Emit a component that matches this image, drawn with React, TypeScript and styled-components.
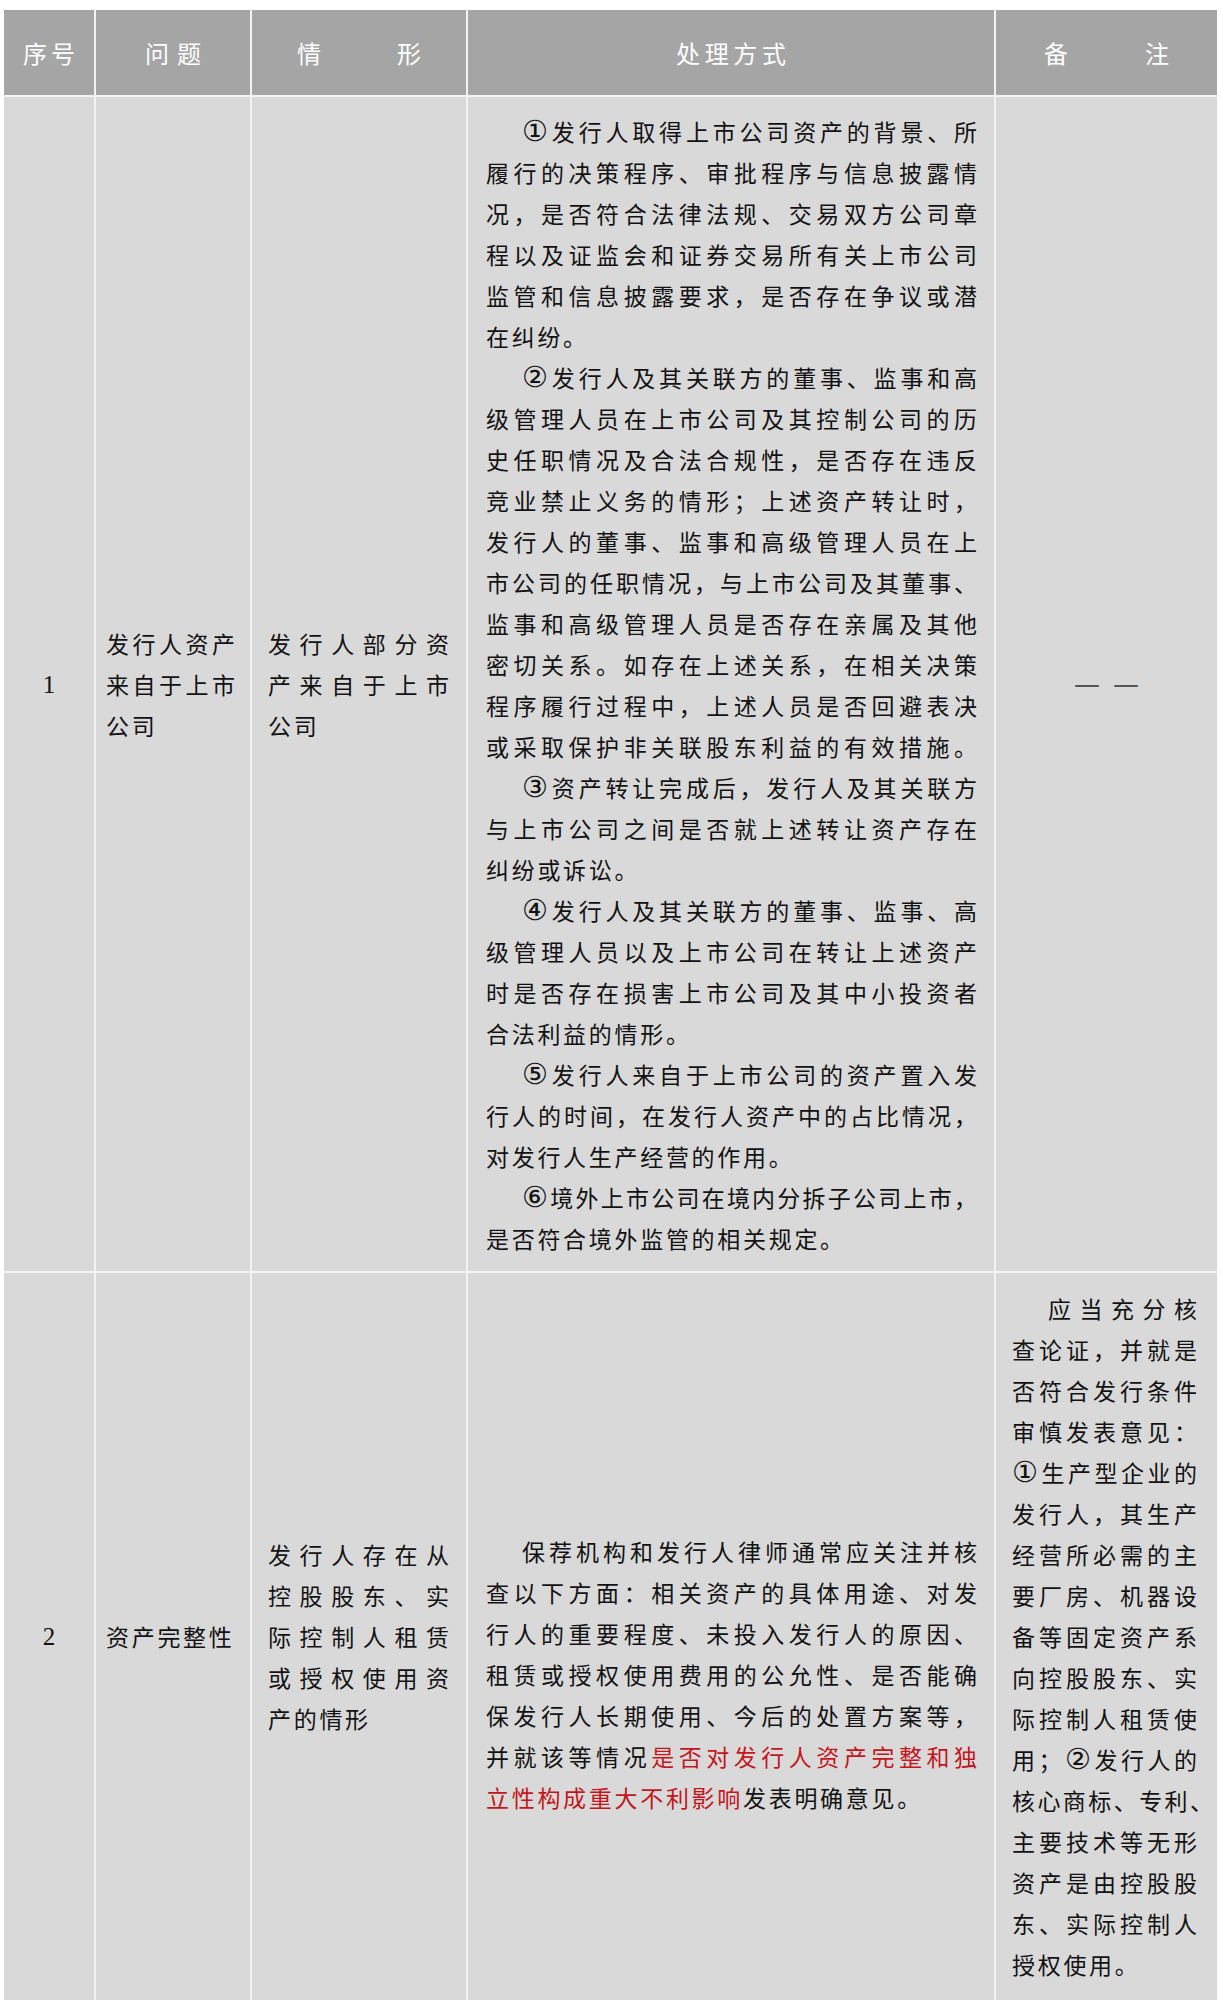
import React from "react";
import styled, { createGlobalStyle } from "styled-components";

const GlobalStyle = createGlobalStyle`
  html, body { margin: 0; padding: 0; background: #ffffff; }
  body { font-family: "Noto Sans CJK SC", "Noto Sans", sans-serif; }
`;

const Page = styled.div`
  padding: 10px 4px 9px 4px;
`;

const Table = styled.div`
  display: grid;
  grid-template-columns: 90px 154px 214px 526px 221px;
  gap: 2px;
  width: 1213px;
  background: #f3f3f3;
`;

const HeadCell = styled.div`
  background: #a5a5a5;
  height: 85px;
  display: flex;
  align-items: center;
  justify-content: center;
  color: #ffffff;
  font-size: 24px;
`;

const Spread = styled.span<{ $w: number }>`
  display: flex;
  justify-content: space-between;
  width: ${(p) => p.$w}px;
`;

const Cell = styled.div<{ $pad: string }>`
  background: #d9d9d9;
  display: flex;
  flex-direction: column;
  justify-content: center;
  padding: ${(p) => p.$pad};
  font-size: 23px;
  line-height: 41px;
  color: #121212;
`;

const NumCell = styled(Cell)`
  align-items: center;
  font-family: "Liberation Serif", serif;
  font-size: 25px;
`;

const DashCell = styled(Cell)`
  flex-direction: row;
  align-items: center;
  justify-content: center;
  gap: 13px;
  color: #555555;
  font-family: "DejaVu Sans", sans-serif;
  font-size: 26px;
`;

const Dash = styled.span`
  display: inline-block;
  width: 26px;
  overflow: hidden;
  white-space: nowrap;
`;

const Line = styled.div<{ $indent?: boolean; $last?: boolean; $overhang?: number }>`
  text-align: justify;
  text-align-last: ${(p) => (p.$last ? "left" : "justify")};
  letter-spacing: ${(p) => (p.$last ? "2.7px" : "0")};
  text-indent: ${(p) => (p.$indent ? "36px" : "0")};
  margin-right: ${(p) => (p.$overhang ? -p.$overhang : 0)}px;
`;

const Circ = styled.span`
  font-family: "DejaVu Sans", sans-serif;
  font-size: 29px;
  line-height: 1;
`;

const Red = styled.span`
  color: #c3161c;
`;

type L = { t: React.ReactNode; i?: boolean; l?: boolean; o?: number };

const Lines = ({ items }: { items: L[] }) => (
  <>
    {items.map((it, k) => (
      <Line key={k} $indent={it.i} $last={it.l} $overhang={it.o}>
        {it.t}
      </Line>
    ))}
  </>
);

const headers: { label: string[]; w: number }[] = [
  { label: ["序", "号"], w: 52 },
  { label: ["问", "题"], w: 56 },
  { label: ["情", "形"], w: 124 },
  { label: ["处", "理", "方", "式"], w: 110 },
  { label: ["备", "注"], w: 125 },
];

const c = (s: string, rest: React.ReactNode) => (
  <>
    <Circ>{s}</Circ>
    {rest}
  </>
);

const row1Method: L[] = [
  { t: c("①", "发行人取得上市公司资产的背景、所"), i: true },
  { t: "履行的决策程序、审批程序与信息披露情" },
  { t: "况，是否符合法律法规、交易双方公司章" },
  { t: "程以及证监会和证券交易所有关上市公司" },
  { t: "监管和信息披露要求，是否存在争议或潜" },
  { t: "在纠纷。", l: true },
  { t: c("②", "发行人及其关联方的董事、监事和高"), i: true },
  { t: "级管理人员在上市公司及其控制公司的历" },
  { t: "史任职情况及合法合规性，是否存在违反" },
  { t: "竞业禁止义务的情形；上述资产转让时，" },
  { t: "发行人的董事、监事和高级管理人员在上" },
  { t: "市公司的任职情况，与上市公司及其董事、" },
  { t: "监事和高级管理人员是否存在亲属及其他" },
  { t: "密切关系。如存在上述关系，在相关决策" },
  { t: "程序履行过程中，上述人员是否回避表决" },
  { t: "或采取保护非关联股东利益的有效措施。" },
  { t: c("③", "资产转让完成后，发行人及其关联方"), i: true },
  { t: "与上市公司之间是否就上述转让资产存在" },
  { t: "纠纷或诉讼。", l: true },
  { t: c("④", "发行人及其关联方的董事、监事、高"), i: true },
  { t: "级管理人员以及上市公司在转让上述资产" },
  { t: "时是否存在损害上市公司及其中小投资者" },
  { t: "合法利益的情形。", l: true },
  { t: c("⑤", "发行人来自于上市公司的资产置入发"), i: true },
  { t: "行人的时间，在发行人资产中的占比情况，" },
  { t: "对发行人生产经营的作用。", l: true },
  { t: c("⑥", "境外上市公司在境内分拆子公司上市，"), i: true },
  { t: "是否符合境外监管的相关规定。", l: true },
];

const row2Method: L[] = [
  { t: "保荐机构和发行人律师通常应关注并核", i: true },
  { t: "查以下方面：相关资产的具体用途、对发" },
  { t: "行人的重要程度、未投入发行人的原因、" },
  { t: "租赁或授权使用费用的公允性、是否能确" },
  { t: "保发行人长期使用、今后的处置方案等，" },
  {
    t: (
      <>
        并就该等情况<Red>是否对发行人资产完整和独</Red>
      </>
    ),
  },
  {
    t: (
      <>
        <Red>立性构成重大不利影响</Red>发表明确意见。
      </>
    ),
    l: true,
  },
];

const row2Note: L[] = [
  { t: "应当充分核", i: true },
  { t: "查论证，并就是" },
  { t: "否符合发行条件" },
  { t: "审慎发表意见：" },
  { t: c("①", "生产型企业的") },
  { t: "发行人，其生产" },
  { t: "经营所必需的主" },
  { t: "要厂房、机器设" },
  { t: "备等固定资产系" },
  { t: "向控股股东、实" },
  { t: "际控制人租赁使" },
  {
    t: (
      <>
        用；<Circ>②</Circ>发行人的
      </>
    ),
  },
  { t: "核心商标、专利、", o: 16 },
  { t: "主要技术等无形" },
  { t: "资产是由控股股" },
  { t: "东、实际控制人" },
  { t: "授权使用。", l: true },
];

export default function App() {
  return (
    <Page>
      <GlobalStyle />
      <Table>
        {headers.map((h, k) => (
          <HeadCell key={k}>
            <Spread $w={h.w}>
              {h.label.map((ch, j) => (
                <span key={j}>{ch}</span>
              ))}
            </Spread>
          </HeadCell>
        ))}

        <NumCell $pad="0">1</NumCell>
        <Cell $pad="0 15px 0 10px">
          <Lines items={[{ t: "发行人资产" }, { t: "来自于上市" }, { t: "公司", l: true }]} />
        </Cell>
        <Cell $pad="0 17px 0 16px">
          <Lines items={[{ t: "发行人部分资" }, { t: "产来自于上市" }, { t: "公司", l: true }]} />
        </Cell>
        <Cell $pad="14px 17px 12px 18px">
          <Lines items={row1Method} />
        </Cell>
        <DashCell $pad="0">
          <Dash>—</Dash>
          <Dash>—</Dash>
        </DashCell>

        <NumCell $pad="0">2</NumCell>
        <Cell $pad="0 15px 0 10px">
          <Lines items={[{ t: "资产完整性", l: true }]} />
        </Cell>
        <Cell $pad="0 17px 0 16px">
          <Lines
            items={[
              { t: "发行人存在从" },
              { t: "控股股东、实" },
              { t: "际控制人租赁" },
              { t: "或授权使用资" },
              { t: "产的情形", l: true },
            ]}
          />
        </Cell>
        <Cell $pad="76px 17px 0 18px">
          <Lines items={row2Method} />
        </Cell>
        <Cell $pad="15px 20px 15px 16px">
          <Lines items={row2Note} />
        </Cell>
      </Table>
    </Page>
  );
}
